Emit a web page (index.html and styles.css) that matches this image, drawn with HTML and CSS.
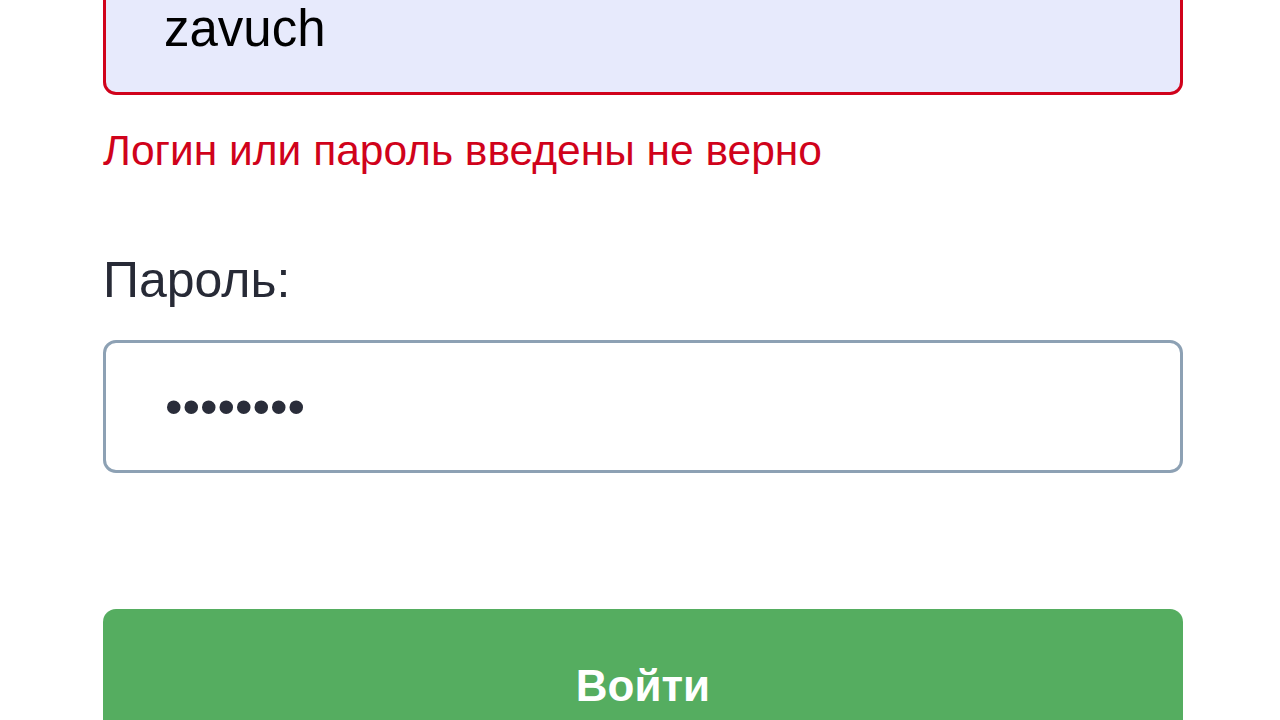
FILE: index.html
```html
<!DOCTYPE html>
<html lang="ru">
<head>
<meta charset="utf-8">
<title>Вход</title>
<link rel="stylesheet" href="styles.css">
</head>
<body>
<form class="login-form">
  <input class="field-input field-input--error field-input--filled" type="text" value="zavuch">
  <p class="error-text">Логин или пароль введены не верно</p>
  <label class="field-label">Пароль:</label>
  <input class="field-input field-input--password" type="password" value="12345678">
  <button class="submit-btn" type="button">Войти</button>
</form>
</body>
</html>
```
FILE: styles.css
```css
html, body {
  margin: 0;
  padding: 0;
  background: #ffffff;
  overflow: hidden;
}

body {
  font-family: "Liberation Sans", Arial, sans-serif;
}

.login-form {
  width: 1080px;
  margin: -38px 0 0 103px;
  display: flex;
  flex-direction: column;
}

.field-input {
  box-sizing: border-box;
  display: block;
  width: 100%;
  height: 133px;
  margin: 0;
  padding: 0 0 0 58px;
  border: 3px solid #8da1b4;
  border-radius: 13px;
  background: #ffffff;
  font-family: "Liberation Sans", Arial, sans-serif;
  font-size: 50px;
  color: #000000;
  outline: none;
}

.field-input--error {
  border-color: #d0021b;
  font-size: 51px;
}

.field-input--filled {
  background: #e7eafc;
}

.field-input--password {
  margin-top: 31px;
  color: #2a2d3a;
  padding-left: 59px;
}

.error-text {
  margin: 32px 0 0;
  font-size: 42.5px;
  line-height: 48px;
  color: #d0021b;
}

.field-label {
  display: block;
  margin-top: 77px;
  font-size: 50px;
  line-height: 57px;
  color: #272a36;
}

.submit-btn {
  box-sizing: border-box;
  display: flex;
  align-items: center;
  justify-content: center;
  width: 100%;
  height: 154px;
  margin-top: 136px;
  padding: 0;
  border: none;
  border-radius: 13px;
  background: #55ad60;
  color: #ffffff;
  font-family: "Liberation Sans", Arial, sans-serif;
  font-size: 44px;
  font-weight: bold;
}
```
